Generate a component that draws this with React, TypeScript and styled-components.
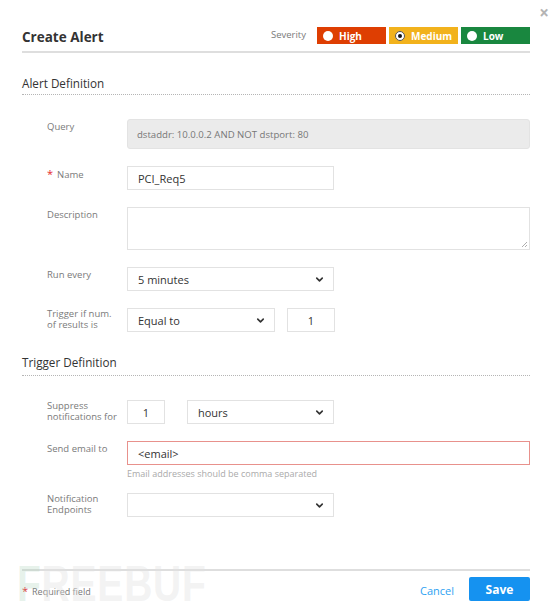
import React, { FC } from 'react';
import styled, { createGlobalStyle } from 'styled-components';
import { ChevronDown } from 'lucide-react';

const GlobalStyle = createGlobalStyle`
  body {
    margin: 0;
    background: #fff;
    font-family: "Open Sans", "Noto Sans", sans-serif;
    color: #333;
  }
  * { box-sizing: border-box; }
`;

const colours = {
  label: '#7a7a7a',
  border: '#e2e2e2',
  high: '#de3e02',
  medium: '#f2b21c',
  low: '#19873f',
  blue: '#1592f0',
};

const Modal = styled.div`
  position: relative;
  width: 554px;
  height: 611px;
  padding: 27px 24px 0 22px;
  overflow: hidden;
`;

const Close = styled.div`
  position: absolute;
  top: 4px;
  right: 5px;
  font-size: 17px;
  font-weight: 700;
  line-height: 17px;
  color: #b4b4b4;
`;

const Header = styled.div`
  display: flex;
  align-items: center;
  height: 26px;
  padding-bottom: 8px;
  border-bottom: 2px solid #dedede;
`;

const Title = styled.div`
  font-size: 13.5px;
  font-weight: 700;
  color: #333;
  flex: 1;
  margin-top: 3px;
`;

const SeverityLabel = styled.div`
  font-size: 9.5px;
  color: ${colours.label};
  margin-right: 11px;
  margin-top: -1px;
`;

const SeverityGroup = styled.div`
  display: flex;
  gap: 3px;
  align-self: flex-start;
`;

const SeverityButton = styled.div<{ $bg: string }>`
  width: 69px;
  height: 17px;
  background: ${(p) => p.$bg};
  display: flex;
  align-items: center;
  padding-left: 6px;
  gap: 6px;
  font-size: 10px;
  font-weight: 700;
  color: #fff;
`;

const Radio = styled.span<{ $checked?: boolean }>`
  width: 10px;
  height: 10px;
  border-radius: 50%;
  background: #fff;
  display: flex;
  align-items: center;
  justify-content: center;
  border: ${(p) => (p.$checked ? '1px solid #555' : 'none')};

  &::after {
    content: '';
    display: ${(p) => (p.$checked ? 'block' : 'none')};
    width: 4px;
    height: 4px;
    border-radius: 50%;
    background: #111;
  }
`;

const SectionTitle = styled.div<{ $top: number; $pad: number }>`
  margin-top: ${(p) => p.$top}px;
  font-size: 11.7px;
  line-height: 16px;
  color: #333;
  padding-bottom: ${(p) => p.$pad}px;
  border-bottom: 1px dotted #b5b5b5;
  margin-bottom: 24px;
`;

const Row = styled.div<{ $gap?: number }>`
  display: flex;
  padding-left: 25px;
  margin-bottom: ${(p) => p.$gap ?? 17}px;
`;

const Label = styled.div`
  width: 80px;
  flex-shrink: 0;
  font-size: 9.5px;
  line-height: 10.5px;
  color: ${colours.label};
  padding-top: 1px;
`;

const SingleLabel = styled(Label)`
  padding-top: 3px;
`;

const Star = styled.span`
  color: #e5282b;
  font-size: 11px;
  margin-right: 4px;
`;

const Controls = styled.div`
  display: flex;
  flex-direction: column;
  flex: 1;
`;

const Inline = styled.div<{ $gap: number }>`
  display: flex;
  gap: ${(p) => p.$gap}px;
`;

const Field = styled.div<{ $w?: number; $center?: boolean; $error?: boolean }>`
  width: ${(p) => (p.$w ? `${p.$w}px` : '100%')};
  height: 24px;
  border: 1px solid ${(p) => (p.$error ? '#e8918c' : colours.border)};
  background: #fff;
  display: flex;
  align-items: center;
  justify-content: ${(p) => (p.$center ? 'center' : 'flex-start')};
  padding: 0 10px;
  font-size: 11px;
  color: #333;
`;

const QueryBox = styled.div`
  height: 30px;
  background: #ebebeb;
  border: 1px solid #e3e3e3;
  border-radius: 3px;
  display: flex;
  align-items: center;
  padding: 0 9px;
  font-size: 9.6px;
  color: #777;
`;

const TextArea = styled.div`
  position: relative;
  height: 43px;
  border: 1px solid ${colours.border};
`;

const Grip = styled.svg`
  position: absolute;
  right: 1px;
  bottom: 1px;
`;

const Select = styled(Field)<{ $empty?: boolean }>`
  justify-content: ${(p) => (p.$empty ? 'flex-end' : 'space-between')};
  padding-right: 8px;
`;

const Help = styled.div`
  font-size: 9px;
  color: #aaa;
  margin-top: 2px;
`;

const Footer = styled.div`
  margin-top: 52px;
  border-top: 2px solid #dedede;
  padding-top: 6px;
  display: flex;
  align-items: center;
`;

const Required = styled.div`
  flex: 1;
  font-size: 9px;
  color: #777;
  padding-top: 2px;
`;

const CancelLink = styled.div`
  font-size: 11px;
  color: #2ea2f2;
  margin-right: 15px;
  padding-top: 3px;
`;

const SaveButton = styled.div`
  width: 61px;
  height: 24px;
  border-radius: 2px;
  background: ${colours.blue};
  color: #fff;
  font-size: 12px;
  font-weight: 700;
  display: flex;
  align-items: center;
  justify-content: center;
`;

const Watermark = styled.div`
  position: absolute;
  left: 17px;
  top: 563px;
  display: flex;
  align-items: flex-end;
  font-family: "Liberation Sans", sans-serif;
  font-weight: 700;
  font-size: 50px;
  line-height: 42px;
  height: 42px;
  letter-spacing: 1px;
  color: rgba(225, 225, 225, 0.4);
  pointer-events: none;
  transform: scaleX(0.78);
  transform-origin: left;
`;

const WmF = styled.span`
  color: rgba(170, 210, 185, 0.3);
`;

const Chevron: FC = () => <ChevronDown size={11} strokeWidth={3.5} color="#333" />;

const App: FC = () => {
  return (
    <Modal>
      <GlobalStyle />
      <Close>×</Close>

      <Header>
        <Title>Create Alert</Title>
        <SeverityLabel>Severity</SeverityLabel>
        <SeverityGroup>
          <SeverityButton $bg={colours.high}>
            <Radio />
            High
          </SeverityButton>
          <SeverityButton $bg={colours.medium}>
            <Radio $checked />
            Medium
          </SeverityButton>
          <SeverityButton $bg={colours.low}>
            <Radio />
            Low
          </SeverityButton>
        </SeverityGroup>
      </Header>

      <SectionTitle $top={22} $pad={3}>Alert Definition</SectionTitle>

      <Row>
        <SingleLabel>Query</SingleLabel>
        <Controls>
          <QueryBox>dstaddr: 10.0.0.2 AND NOT dstport: 80</QueryBox>
        </Controls>
      </Row>

      <Row>
        <SingleLabel>
          <Star>*</Star>Name
        </SingleLabel>
        <Controls>
          <Field $w={207}>PCI_Req5</Field>
        </Controls>
      </Row>

      <Row>
        <SingleLabel>Description</SingleLabel>
        <Controls>
          <TextArea>
            <Grip width="7" height="7" viewBox="0 0 7 7">
              <path d="M6 1 L1 6 M6 4 L4 6" stroke="#999" strokeWidth="0.8" />
            </Grip>
          </TextArea>
        </Controls>
      </Row>

      <Row>
        <SingleLabel>Run every</SingleLabel>
        <Controls>
          <Select $w={207}>
            5 minutes
            <Chevron />
          </Select>
        </Controls>
      </Row>

      <Row $gap={0}>
        <Label>
          Trigger if num.
          <br />
          of results is
        </Label>
        <Controls>
          <Inline $gap={12}>
            <Select $w={148}>
              Equal to
              <Chevron />
            </Select>
            <Field $w={48} $center>
              1
            </Field>
          </Inline>
        </Controls>
      </Row>

      <SectionTitle $top={22} $pad={5}>Trigger Definition</SectionTitle>

      <Row>
        <Label>
          Suppress
          <br />
          notifications for
        </Label>
        <Controls>
          <Inline $gap={22}>
            <Field $w={38} $center>
              1
            </Field>
            <Select $w={147}>
              hours
              <Chevron />
            </Select>
          </Inline>
        </Controls>
      </Row>

      <Row $gap={13}>
        <SingleLabel>Send email to</SingleLabel>
        <Controls>
          <Field $error>&lt;email&gt;</Field>
          <Help>Email addresses should be comma separated</Help>
        </Controls>
      </Row>

      <Row $gap={0}>
        <Label>
          Notification
          <br />
          Endpoints
        </Label>
        <Controls>
          <Select $w={207} $empty>
            <Chevron />
          </Select>
        </Controls>
      </Row>

      <Footer>
        <Required>
          <Star>*</Star>Required field
        </Required>
        <CancelLink>Cancel</CancelLink>
        <SaveButton>Save</SaveButton>
      </Footer>

      <Watermark aria-hidden>
        <WmF>F</WmF>REEBUF
      </Watermark>
    </Modal>
  );
};

export default App;
